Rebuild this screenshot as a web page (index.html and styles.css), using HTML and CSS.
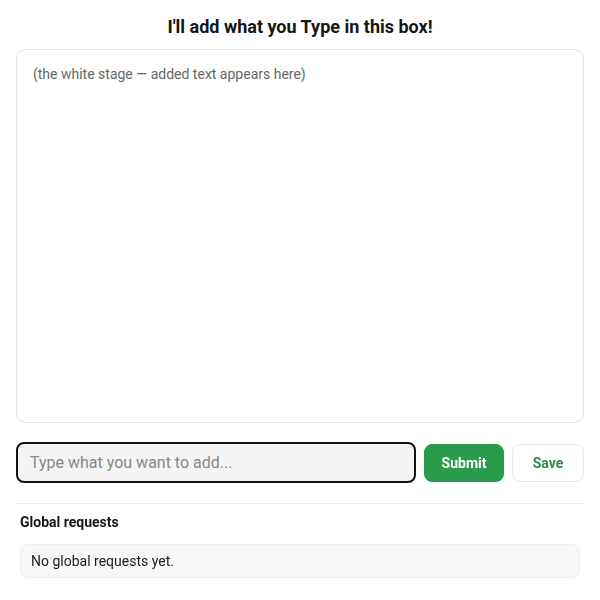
FILE: index.html
```html
<!DOCTYPE html>
<html lang="en">

<head>
  <meta charset="UTF-8">
  <meta name="viewport" content="width=device-width, initial-scale=1.0">
  <title>Type in this box</title>
  <link rel="stylesheet" href="styles.css">
</head>

<body>
  <main class="app">
    <h1 class="title">I'll add what you Type in this box!</h1>

    <div class="stage" id="stage">
      <p class="stage-hint">(the white stage — added text appears here)</p>
    </div>

    <form class="entry-row" id="entryForm">
      <input class="entry-input" id="entryInput" type="text" placeholder="Type what you want to add..." autofocus>
      <button class="btn btn-submit" type="submit">Submit</button>
      <button class="btn btn-save" type="button">Save</button>
    </form>

    <section class="global">
      <h2 class="global-title">Global requests</h2>
      <div class="global-list">No global requests yet.</div>
    </section>
  </main>
</body>

</html>
```

FILE: styles.css
```css
/* Base */
body {
  margin: 0;
  padding: 16px;
  font-family: Roboto, 'Liberation Sans', Arial, sans-serif;
  background: #fff;
  color: #111;
  box-sizing: border-box;
}

.app {
  display: flex;
  flex-direction: column;
}

/* Title */
.title {
  margin: 0 0 11px;
  font-size: 18px;
  font-weight: 700;
  line-height: 22px;
  text-align: center;
  color: #161616;
}

/* Stage */
.stage {
  height: 374px;
  box-sizing: border-box;
  border: 1px solid #e3e3e3;
  border-radius: 10px;
  padding: 16px 16px;
  background: #fff;
}

.stage-hint {
  margin: 0;
  font-size: 14px;
  line-height: 16px;
  color: #666;
}

/* Entry row */
.entry-row {
  display: flex;
  align-items: center;
  gap: 8px;
  margin: 19px 0 0;
  padding-bottom: 20px;
  border-bottom: 1px solid #ececec;
}

.entry-input {
  flex: 1 1 auto;
  min-width: 0;
  height: 41px;
  box-sizing: border-box;
  border: 2px solid #111;
  border-radius: 8px;
  background: #f4f4f4;
  padding: 0 12px;
  font-family: inherit;
  font-size: 16px;
  color: #111;
  outline: none;
}

.entry-input::placeholder {
  color: #888;
}

.btn {
  height: 38px;
  box-sizing: border-box;
  border-radius: 8px;
  font-family: inherit;
  font-size: 14px;
  font-weight: 700;
  cursor: pointer;
}

.btn-submit {
  width: 80px;
  background: #2a9a4b;
  border: 1px solid #2a9a4b;
  color: #fff;
}

.btn-save {
  width: 72px;
  background: #fff;
  border: 1px solid #dfeee3;
  color: #2a8c47;
}

/* Global requests */
.global {
  padding: 0 4px;
  margin-top: 9px;
}

.global-title {
  margin: 0 0 13px;
  font-size: 14px;
  font-weight: 700;
  line-height: 18px;
  color: #161616;
}

.global-list {
  height: 34px;
  box-sizing: border-box;
  display: flex;
  align-items: center;
  padding: 0 10px;
  background: #f8f8f8;
  border: 1px solid #efefef;
  border-radius: 8px;
  font-size: 14px;
  color: #1a1a1a;
}
```
